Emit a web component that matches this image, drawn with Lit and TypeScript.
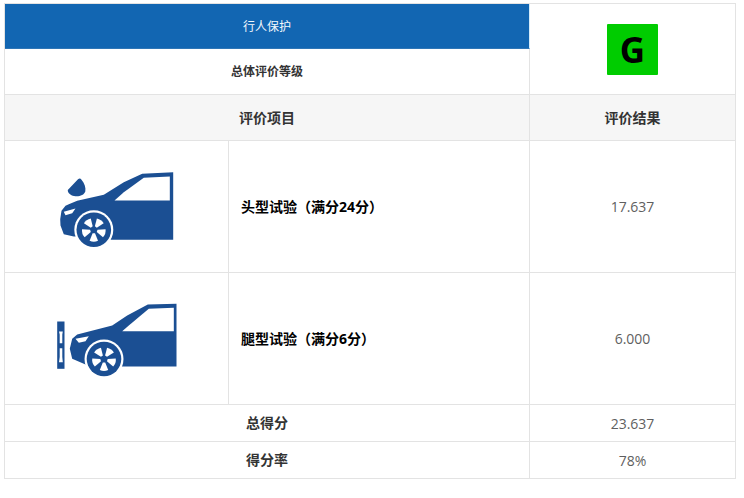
import { LitElement, html, css, svg } from "lit";
import { customElement } from "lit/decorators.js";

const wheel = (cx: number, cy: number) => svg`
  <circle cx=${cx} cy=${cy} r="19.500" fill="#fff"/>
  <circle cx=${cx} cy=${cy} r="17.300" fill="#1b4f93"/>
  ${[0, 72, 144, 216, 288].map(
    (a) => svg`<path transform="rotate(${a + 36} ${cx} ${cy})" d="M${cx - 1.2} ${cy - 3.5}L${cx - 4.2} ${cy - 11}Q${cx} ${cy - 13} ${cx + 4.2} ${cy - 11}L${cx + 1.2} ${cy - 3.5}Z" fill="#fff"/>`
  )}`;

const headCar = svg`<svg class="car" width="150" height="100" viewBox="1.500 -3.500 150 100">
  <path fill="#1b4f93" d="M132.700 11.700V79.300H70V76H33.300L23.300 73.700 20 65 19.700 58.700 21 50.300 25 45.300 28.300 43.700 36.700 40.300 63.300 34.300 83.300 21.700 101.700 13.300Z"/>
  <path fill="#fff" d="M74 40 83.300 31.700 103.300 17.300 129.300 16V40Z"/>
  <path fill="#fff" d="M23.300 51.300 35 48 31.700 52.700 25 54.700Z"/>
  <path fill="#1b4f93" d="M27.300 29.500 37.500 18.800C39 17.700 40 18 41 19.200 44 22.500 45.500 27 44.800 31 43.500 35 38 36.500 33.500 35.500 30 34.800 27 32.500 27.300 29.500Z"/>
  ${wheel(53.300, 69.300)}
</svg>`;

const legCar = svg`<svg class="car" width="150" height="100" viewBox="1.500 -1.500 150 100">
  <path fill="#1b4f93" d="M136 13.300V76H80V74H45L31.700 68.300 29.300 58.300 31.700 48.300 36.700 44 71.700 35 86.700 25 107.300 14Z"/>
  <path fill="#fff" d="M81.700 40.700 88.300 35 108.300 18.300 133.300 17.300V40.700Z"/>
  <path fill="#fff" d="M35 48.300 48.300 45.700 45 50.700 38.300 52.300Z"/>
  <rect x="16.700" y="31" width="7.300" height="47.300" fill="#1b4f93"/>
  <path fill="#fff" d="M18.500 41H22.300L21.800 44V52.700H19.200V44Z"/>
  <path fill="#fff" d="M19.200 57.700H21.800V66.500L22.300 71.700H18.500L19.200 66.500Z"/>
  ${wheel(63.500, 68.500)}
</svg>`;

@customElement("app-root")
export class AppRoot extends LitElement {
  static styles = css`
    :host {
      display: block;
      width: 744px;
      height: 498px;
      background: #fff;
      box-sizing: border-box;
      padding: 3px 0 0 4px;
      font-family: "Open Sans", "Noto Sans CJK SC", sans-serif;
    }
    .grid {
      display: grid;
      width: 732px;
      grid-template-columns: 224px 301px 206px;
      grid-template-rows: 45px 46px 46px 132px 132px 37px 37px;
      border-top: 1px solid #e3e3e3;
      border-left: 1px solid #e3e3e3;
      box-sizing: border-box;
    }
    .cell {
      display: flex;
      align-items: center;
      justify-content: center;
      box-sizing: border-box;
      border-right: 1px solid #e3e3e3;
      border-bottom: 1px solid #e3e3e3;
      font-size: 14px;
      color: #5f5f5f;
      min-width: 0;
    }
    .wide { grid-column: span 2; }
    .tall { grid-row: span 2; }
    .blue {
      background: #1266b2;
      color: #f2f7fc;
      font-size: 12px;
      border-right-color: #d5ecfa;
      border-bottom-color: #2f76b6;
    }
    .sub { font-size: 12px; font-weight: 700; color: #333; padding-bottom: 2px; }
    .head { background: #f6f6f6; font-weight: 700; color: #333; padding-bottom: 2px; }
    .name { justify-content: flex-start; padding: 0 0 2px 12px; font-weight: 700; color: #000; }
    .total { font-weight: 700; color: #333; padding-bottom: 2px; }
    .badge {
      width: 51px;
      height: 51px;
      border-radius: 1px;
      background: #00cc00;
      color: #000;
      display: flex;
      align-items: center;
      justify-content: center;
      font-size: 35px;
      font-weight: 700;
      line-height: 1;
    }
    .car { display: block; flex: none; }
  `;

  render() {
    return html`<div class="grid">
      <div class="cell wide blue">行人保护</div>
      <div class="cell tall"><div class="badge">G</div></div>
      <div class="cell wide sub">总体评价等级</div>
      <div class="cell wide head">评价项目</div>
      <div class="cell head">评价结果</div>
      <div class="cell">${headCar}</div>
      <div class="cell name">头型试验（满分24分）</div>
      <div class="cell">17.637</div>
      <div class="cell">${legCar}</div>
      <div class="cell name">腿型试验（满分6分）</div>
      <div class="cell">6.000</div>
      <div class="cell wide total">总得分</div>
      <div class="cell">23.637</div>
      <div class="cell wide total">得分率</div>
      <div class="cell">78%</div>
    </div>`;
  }
}
